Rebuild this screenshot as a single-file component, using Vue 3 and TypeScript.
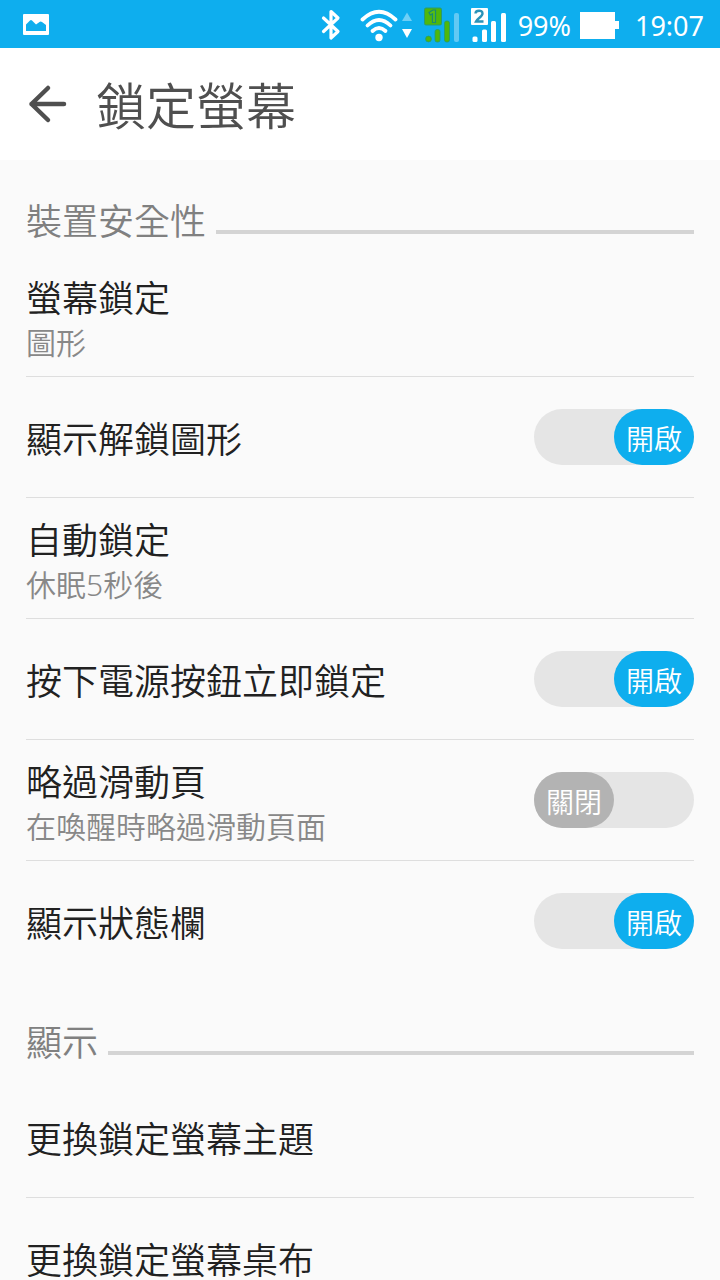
<script setup lang="ts">
import { reactive } from 'vue'

interface Setting {
  id: string
  title: string
  summary?: string
  enabled?: boolean
}

interface Section {
  id: string
  heading: string
  items: Setting[]
}

const sections = reactive<Section[]>([
  {
    id: 'security',
    heading: '裝置安全性',
    items: [
      { id: 'screen-lock', title: '螢幕鎖定', summary: '圖形' },
      { id: 'show-pattern', title: '顯示解鎖圖形', enabled: true },
      { id: 'auto-lock', title: '自動鎖定', summary: '休眠5秒後' },
      { id: 'power-lock', title: '按下電源按鈕立即鎖定', enabled: true },
      { id: 'skip-slide', title: '略過滑動頁', summary: '在喚醒時略過滑動頁面', enabled: false },
      { id: 'status-bar', title: '顯示狀態欄', enabled: true },
    ],
  },
  {
    id: 'display',
    heading: '顯示',
    items: [
      { id: 'theme', title: '更換鎖定螢幕主題' },
      { id: 'wallpaper', title: '更換鎖定螢幕桌布' },
    ],
  },
])
</script>

<template>
  <div class="screen" lang="zh-Hant">
    <div class="status-bar">
      <svg class="icon" width="26" height="48" viewBox="0 0 26 48" aria-hidden="true">
        <rect x="0" y="14" width="26" height="21" rx="1" fill="#fff" />
        <path d="M3 31V24.500L7 20.500Q8 19.500 9 20.500L13 24.500L16.500 22Q17.500 21 19 22L23 25V31Z" fill="#0eaeee" />
      </svg>

      <div class="indicators">
        <svg class="icon" width="20" height="48" viewBox="0 0 20 48" aria-hidden="true">
          <path d="M2.500 18l14.500 13.500-7 6.500V11.500l7 6.500L2.500 31.500" fill="none" stroke="#fff" stroke-width="3.200" stroke-linejoin="round" stroke-linecap="round" />
        </svg>
        <svg class="icon wifi" width="52" height="48" viewBox="0 0 52 48" aria-hidden="true">
          <g fill="none" stroke="#fff" stroke-width="3.800" stroke-linecap="round">
            <path d="M2.500 19.500Q19 4 35.500 19.500" />
            <path d="M7.500 25.500Q19 14.500 30.500 25.500" />
            <path d="M12.500 31Q19 25 25.500 31" />
          </g>
          <circle cx="19" cy="37.500" r="3.700" fill="#fff" />
          <path d="M47 12.500l5 8.500H42z" fill="#6ecff6" />
          <path d="M42 29h10l-5 9z" fill="#fff" />
        </svg>
        <svg class="icon signal" width="36" height="48" viewBox="0 0 36 48" aria-hidden="true">
          <rect x="0.500" y="8" width="17" height="17" rx="1.500" fill="#4fb70b" stroke="#2a9b6c" />
          <path d="M5 12.500L9 10h2.500v12.500h-3V13.700L6.300 15z" fill="#5abf10" stroke="#178c70" stroke-width="1.200" />
          <g fill="#4fb70b" stroke="#279c69" stroke-width="0.800">
            <circle cx="4.500" cy="39" r="2.900" />
            <rect x="11" y="29.500" width="5" height="12.500" rx="2" />
            <rect x="20.500" y="21" width="5" height="21" rx="2" />
          </g>
          <rect x="30" y="13" width="5" height="29" rx="2" fill="#62c9f4" />
        </svg>
        <svg class="icon signal-two" width="36" height="48" viewBox="0 0 36 48" aria-hidden="true">
          <rect x="0" y="8" width="17" height="17" rx="1" fill="#fff" />
          <path d="M4.500 13.500c0-3.500 7-4 7 0 0 3-5 5-6.500 8h7.500" fill="none" stroke="#2b93b8" stroke-width="2.400" />
          <g fill="#fff">
            <rect x="1.500" y="36.500" width="5" height="5.500" rx="1.500" />
            <rect x="11" y="29.500" width="5" height="12.500" rx="1.500" />
            <rect x="20" y="21" width="5" height="21" rx="1.500" />
            <rect x="30" y="13" width="5" height="29" rx="1.500" />
          </g>
        </svg>
        <span class="reading percent">99%</span>
        <svg class="icon battery" width="39" height="48" viewBox="0 0 39 48" aria-hidden="true">
          <path d="M0 12h35v9h4v8h-4v10H0z" fill="#fff" />
        </svg>
        <time class="reading clock">19:07</time>
      </div>
    </div>

    <header class="app-bar">
      <button class="back" type="button" aria-label="返回">
        <svg width="40" height="40" viewBox="0 0 40 40" aria-hidden="true">
          <path d="M36 20H3.500M20 4L3.500 20 20 36" fill="none" stroke="#4f4f4f" stroke-width="4.500" stroke-linecap="round" stroke-linejoin="round" />
        </svg>
      </button>
      <h1>鎖定螢幕</h1>
    </header>

    <main>
      <section v-for="section in sections" :key="section.id" :aria-labelledby="section.id">
        <div class="section-head">
          <h2 :id="section.id">{{ section.heading }}</h2>
          <span class="rule"></span>
        </div>
        <ul>
          <li v-for="item in section.items" :key="item.id">
            <label v-if="item.enabled !== undefined" class="row">
              <span class="copy">
                <span class="title">{{ item.title }}</span>
                <span v-if="item.summary" class="summary">{{ item.summary }}</span>
              </span>
              <span class="switch">
                <input v-model="item.enabled" type="checkbox" role="switch" :aria-label="item.title" />
                <span class="thumb" aria-hidden="true">{{ item.enabled ? '開啟' : '關閉' }}</span>
              </span>
            </label>
            <button v-else class="row" type="button">
              <span class="copy">
                <span class="title">{{ item.title }}</span>
                <span v-if="item.summary" class="summary">{{ item.summary }}</span>
              </span>
            </button>
          </li>
        </ul>
      </section>
    </main>
  </div>
</template>

<style>
body {
  margin: 0;
  background: #fafafa;
}
</style>

<style scoped>
.screen {
  display: flex;
  flex-direction: column;
  height: 100vh;
  background: #fafafa;
  color: #212121;
  font-family: "Noto Sans", "Noto Sans CJK TC", sans-serif;
  font-weight: 350;
}

.status-bar {
  display: flex;
  flex: none;
  align-items: center;
  justify-content: space-between;
  height: 48px;
  padding: 0 16px 0 23px;
  background: #0eaeee;
  color: #fff;
}

.indicators {
  display: flex;
  align-items: center;
}

.reading {
  padding-top: 4px;
  font-size: 27px;
  font-weight: 400;
  line-height: 40px;
}

.icon {
  display: block;
  flex: none;
}

.wifi {
  margin-left: 19px;
}

.signal {
  margin-left: 12px;
}

.signal-two {
  margin-left: 11px;
}

.percent {
  margin-left: 11px;
}

.battery {
  margin-left: 9px;
}

.clock {
  margin-left: 16px;
}

.app-bar {
  display: flex;
  flex: none;
  align-items: center;
  gap: 28px;
  height: 112px;
  padding: 0 28px;
  background: #fff;
  color: #4f4f4f;
}

.back {
  display: block;
  padding: 0;
  border: 0;
  background: none;
}

.back svg {
  display: block;
}

h1 {
  margin: 0;
  padding-top: 4px;
  font-size: 50px;
  font-weight: 350;
  line-height: 72px;
}

main {
  flex: 1;
  min-height: 0;
  overflow-y: auto;
  scrollbar-width: none;
}

.section-head {
  display: flex;
  align-items: flex-end;
  gap: 10px;
  height: 74px;
  padding: 0 26px 22px;
}

h2 {
  margin: 0;
  color: #808080;
  font-size: 36px;
  font-weight: 350;
  line-height: 24px;
}

.rule {
  flex: 1;
  height: 4px;
  background: #d4d4d4;
}

ul {
  margin: 0;
  padding: 0 26px;
  list-style: none;
}

li + li {
  border-top: 1px solid #dedede;
}

.row {
  display: flex;
  align-items: center;
  justify-content: space-between;
  width: 100%;
  min-height: 120px;
  padding: 0;
  border: 0;
  background: none;
  color: inherit;
  font: inherit;
  text-align: left;
}

.copy {
  display: flex;
  flex-direction: column;
  padding-top: 6px;
}

.title {
  font-size: 36px;
  line-height: 48px;
}

.summary {
  color: #888;
  font-size: 30px;
  line-height: 40px;
}

.switch {
  position: relative;
  display: flex;
  flex: none;
  width: 160px;
  height: 56px;
  border-radius: 28px;
  background: #e5e5e5;
}

.switch input {
  position: absolute;
  inset: 0;
  width: 100%;
  height: 100%;
  margin: 0;
  opacity: 0;
}

.thumb {
  width: 80px;
  border-radius: 28px;
  background: #b3b3b3;
  color: #fff;
  font-size: 28px;
  line-height: 60px;
  text-align: center;
}

input:checked + .thumb {
  margin-left: auto;
  background: #0eaeee;
}
</style>
